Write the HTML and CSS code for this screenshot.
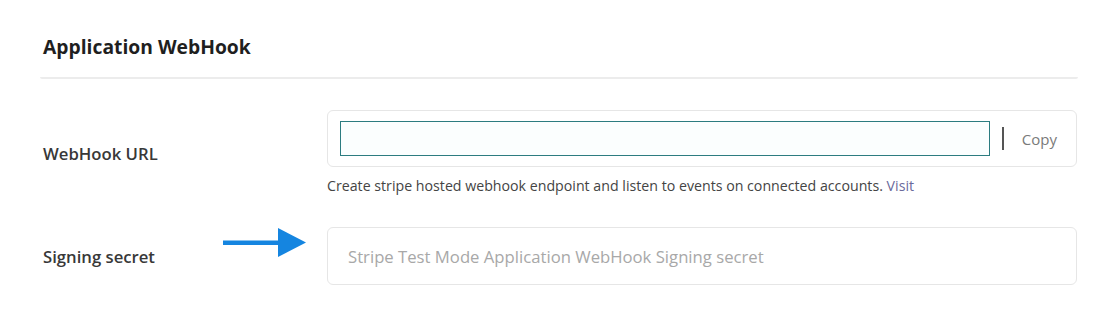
FILE: index.html
```html
<!DOCTYPE html>
<html>
<head>
<meta charset="utf-8">
<link rel="stylesheet" href="styles.css">
</head>
<body>
<div class="card">
  <div class="card-header">
    <h2 class="title">Application WebHook</h2>
  </div>
  <div class="form">
    <div class="row row-url">
      <div class="label">WebHook URL</div>
      <div class="field">
        <div class="box box-url">
          <input class="url-input" type="text" value="">
          <span class="sep"></span>
          <span class="copy">Copy</span>
        </div>
        <p class="help">Create stripe hosted webhook endpoint and listen to events on connected accounts. <a class="link" href="#">Visit</a></p>
      </div>
    </div>
    <div class="row row-secret">
      <div class="label label-secret">Signing secret
        <svg class="arrow" width="84" height="30" viewBox="0 0 84 30">
          <rect x="0" y="12.5" width="58" height="4.5" fill="#1585e0"/>
          <polygon points="55,0 83,14.5 55,29" fill="#1585e0"/>
        </svg>
      </div>
      <div class="field">
        <div class="box box-secret">
          <span class="placeholder">Stripe Test Mode Application WebHook Signing secret</span>
        </div>
      </div>
    </div>
  </div>
</div>
</body>
</html>
```

FILE: styles.css
```css
* { box-sizing: border-box; }
html, body {
  margin: 0;
  padding: 0;
  background: #ffffff;
}
body {
  font-family: "Open Sans", "Noto Sans", "Liberation Sans", sans-serif;
  color: #333;
}
.card {
  width: 1104px;
  height: 313px;
  padding: 0 26px 0 40px;
}
.card-header {
  height: 79px;
  padding: 33px 0 0 3px;
  border-bottom: 2px solid #ececec;
  border-radius: 0 0 2px 2px;
}
.title {
  margin: 0;
  font-size: 19.3px;
  line-height: 28px;
  font-weight: 700;
  color: #1f1f1f;
}
.form {
  padding-top: 31px;
}
.row {
  display: grid;
  grid-template-columns: 287px 750px;
  align-items: center;
}
.row-secret {
  margin-top: 31px;
}
.label {
  padding-left: 3px;
  font-size: 16.7px;
  font-weight: 600;
  color: #383838;
}
.label-secret {
  position: relative;
}
.arrow {
  position: absolute;
  left: 183px;
  top: -17px;
}
.box {
  border: 1px solid #e6e6e6;
  border-radius: 6px;
  background: #fff;
}
.box-url {
  height: 57px;
  display: flex;
  align-items: center;
  padding: 0 19px 0 12px;
}
.url-input {
  width: 652px;
  height: 35px;
  border: 1.5px solid #2c7c80;
  background: #fbfefe;
  outline: none;
  margin: 0;
  padding: 0 8px;
  font: inherit;
}
.sep {
  width: 1.5px;
  height: 23px;
  background: #555;
  margin-left: 12px;
}
.copy {
  margin-left: 18px;
  font-size: 15px;
  color: #7a7a7a;
}
.help {
  margin: 9px 0 0 0;
  font-size: 14.2px;
  line-height: 20px;
  color: #444;
}
.link {
  color: #6a6a9c;
  text-decoration: none;
}
.box-secret {
  height: 58px;
  display: flex;
  align-items: center;
  padding-left: 20px;
}
.placeholder {
  font-size: 16.7px;
  color: #a8a8a8;
}
```
